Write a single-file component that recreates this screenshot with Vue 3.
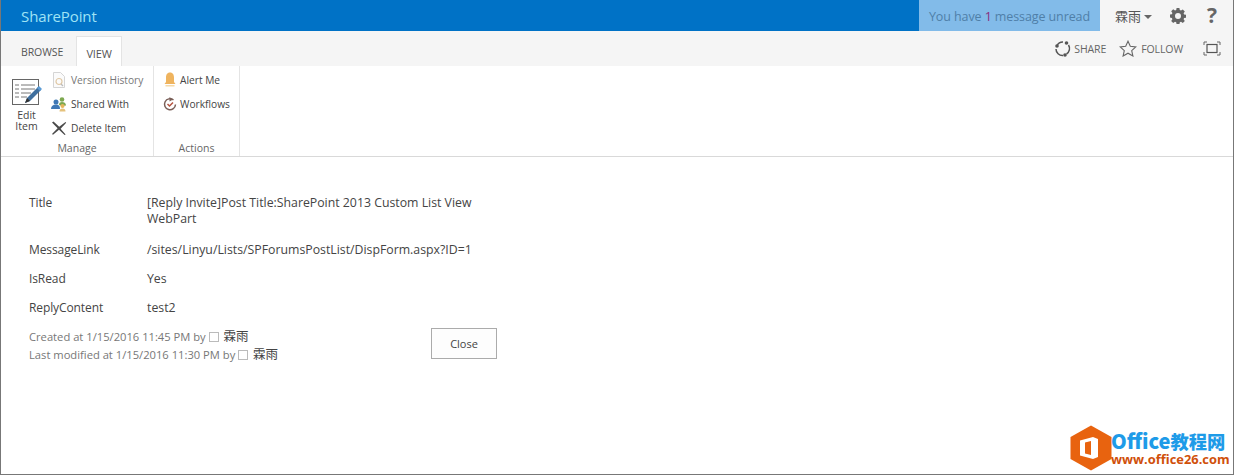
<script setup>
const fields = [
  { label: 'Title', value: '[Reply Invite]Post Title:SharePoint 2013 Custom List View WebPart' },
  { label: 'MessageLink', value: '/sites/Linyu/Lists/SPForumsPostList/DispForm.aspx?ID=1' },
  { label: 'IsRead', value: 'Yes' },
  { label: 'ReplyContent', value: 'test2' },
]
</script>

<template>
  <div class="page">
    <header class="topbar">
      <div class="brand">SharePoint</div>
      <div class="notice">You have <span class="count">1</span> message unread</div>
      <div class="user">
        <span class="username">霖雨</span>
        <span class="caret"></span>
      </div>
      <svg class="gear" width="16" height="16" viewBox="0 0 16 16">
        <path fill="#666" fill-rule="evenodd" d="M6.6 0h2.800l.4 2.100 1.200.5L12.800 1.400l2 2-1.200 1.800.5 1.200 2.100.4v2.800l-2.100.4-.5 1.200 1.200 1.800-2 2-1.800-1.200-1.200.5-.4 2.100H6.600l-.4-2.100-1.200-.5-1.800 1.200-2-2 1.200-1.800-.5-1.200L-.2 9.400V6.600l2.100-.4.500-1.200L1.200 3.200l2-2L5 2.400l1.200-.5zM8 5a3 3 0 1 0 0 6 3 3 0 0 0 0-6z"/>
      </svg>
      <div class="help">?</div>
    </header>

    <nav class="tabs">
      <div class="tab browse">BROWSE</div>
      <div class="tab active">VIEW</div>
      <div class="actions">
        <span class="action">
          <svg width="17" height="17" viewBox="0 0 17 17" fill="none">
            <path d="M3 5.500A6.500 6.500 0 0 1 9 2M14.500 5A6.500 6.500 0 0 1 12.500 14M9 15.500A6.500 6.500 0 0 1 2 9" stroke="#555" stroke-width="1.500"/>
            <circle cx="3" cy="6" r="1.800" fill="#555"/><circle cx="12.500" cy="3" r="1.800" fill="#555"/><circle cx="11" cy="15" r="1.800" fill="#555"/>
          </svg>
          SHARE
        </span>
        <span class="action follow">
          <svg width="18" height="17" viewBox="0 0 18 17" fill="none">
            <path d="M9 1.200l2.300 5.100 5.500.6-4.100 3.700 1.200 5.400L9 13.200 4.100 16l1.200-5.400L1.200 6.900l5.500-.6z" stroke="#666" stroke-width="1.100"/>
          </svg>
          FOLLOW
        </span>
        <svg class="focus" width="18" height="15" viewBox="0 0 18 15" fill="none">
          <path d="M1 4V1h3M14 1h3v3M17 11v3h-3M4 14H1v-3" stroke="#666"/>
          <rect x="4" y="3.500" width="10" height="8" stroke="#555" stroke-width="1.200"/>
        </svg>
      </div>
    </nav>

    <section class="ribbon">
      <div class="group manage">
        <div class="group-body">
          <div class="large">
            <svg width="32" height="32" viewBox="0 0 32 32" fill="none">
              <rect x="1.500" y="1.500" width="26" height="25" fill="#fff" stroke="#666"/>
              <path d="M4 7h4M10 7h14M4 11h4M10 11h14M4 15h4M10 15h10M4 19h4M10 19h6" stroke="#777"/>
              <path d="M14 25l2-5L27 9l3 3-11 11z" fill="#3f6f9e"/>
              <path d="M26 10l3 3 2-2-3-3z" fill="#5b9bd5"/>
              <path d="M14 25l2-5 3 3z" fill="#333"/>
            </svg>
            <span class="large-label">Edit<br />Item</span>
          </div>
          <div class="stack">
            <div class="cmd muted">
              <svg width="16" height="18" viewBox="0 0 16 18" fill="none">
                <path d="M2.500 1.500h7l4 4v11h-11z" fill="#fbfbfb" stroke="#d5d5d5"/>
                <circle cx="8" cy="10.500" r="3" stroke="#e0c9a6" stroke-width="1.200"/>
                <path d="M10 13l2 2" stroke="#bbb" stroke-width="1.200"/>
              </svg>
              Version History
            </div>
            <div class="cmd">
              <svg width="16" height="16" viewBox="0 0 16 16">
                <circle cx="5" cy="6" r="2.500" fill="#3f78b5"/><path d="M0 13c0-3 2-4.500 5-4.500S9 10 9 13z" fill="#3f78b5"/>
                <circle cx="11" cy="3.500" r="2.300" fill="#7da84f"/><path d="M8 9c0-2 1-3 3-3s4 1 4 3.500L11 10z" fill="#7da84f"/>
                <circle cx="11.500" cy="10" r="2" fill="#e5b55a"/><path d="M8.500 15.500c0-2 1-3 3-3s3 1 3 3z" fill="#e5c27c"/>
              </svg>
              Shared With
            </div>
            <div class="cmd">
              <svg width="16" height="16" viewBox="0 0 16 16">
                <path d="M1 2.500l1.500-1L8.200 6.700 14.500 2l.7.8-5.600 5.900 5 5.800-1 .6L8 9.800 2 14.800l-1-.8 5.600-5.700z" fill="#4a4a4a"/>
              </svg>
              Delete Item
            </div>
          </div>
        </div>
        <div class="group-name">Manage</div>
      </div>
      <div class="group acts">
        <div class="group-body">
          <div class="stack">
            <div class="cmd">
              <svg width="16" height="16" viewBox="0 0 16 16">
                <path d="M8 .5c3 0 4 2.500 4 5v4.500l1.500 2h-11L4 10V5.500C4 3 5 .5 8 .5z" fill="#efb45f"/>
                <rect x="3.500" y="13" width="9" height="1.500" fill="#f6d9a8"/>
              </svg>
              Alert Me
            </div>
            <div class="cmd">
              <svg width="16" height="16" viewBox="0 0 16 16" fill="none">
                <path d="M11.500 4A5.500 5.500 0 1 0 13.500 8.500" stroke="#7a5f58" stroke-width="1.500"/>
                <path d="M7.500 1l3.500 2.500L7.500 5.500z" fill="#7a5f58"/>
                <path d="M5.500 8l2 2 3.500-3.500" stroke="#b5533f" stroke-width="1.500"/>
              </svg>
              Workflows
            </div>
          </div>
        </div>
        <div class="group-name">Actions</div>
      </div>
    </section>

    <main class="content">
      <div class="form">
        <div v-for="field in fields" :key="field.label" class="row">
          <div class="label">{{ field.label }}</div>
          <div class="value">{{ field.value }}</div>
        </div>
      </div>
      <div class="footer">
        <div class="meta">
          <div>Created at 1/15/2016 11:45 PM by <i class="presence"></i> <b>霖雨</b></div>
          <div>Last modified at 1/15/2016 11:30 PM by <i class="presence"></i> <b>霖雨</b></div>
        </div>
        <button class="close" type="button">Close</button>
      </div>
    </main>

    <div class="watermark">
      <svg width="42" height="46" viewBox="0 0 42 46">
        <path d="M21 .5L41.500 12v22L21 45.500.5 34V12z" fill="#e8630f"/>
        <path d="M23 12l-13 3.500v15L23 34l5-2V14z" fill="#fff"/>
        <path d="M21 16l-6 1.500v11l6 1.500z" fill="#e8630f"/>
      </svg>
      <div class="mark-text">
        <div class="mark-top">Office<span class="mark-cjk">教程网</span></div>
        <div class="mark-url">www.office26.com</div>
      </div>
    </div>
  </div>
</template>

<style>
html, body { margin: 0; background: #fff; }
</style>

<style scoped>
.page {
  position: relative;
  box-sizing: border-box;
  width: 1234px;
  height: 475px;
  overflow: hidden;
  background: #fff;
  border-left: 1px solid #777;
  border-right: 1px solid #777;
  border-bottom: 1px solid #777;
  font-family: "Open Sans", "Noto Sans CJK SC", sans-serif;
  color: #444;
  font-size: 12px;
}
.topbar {
  display: flex;
  align-items: center;
  height: 31px;
  background: #f5f5f5;
}
.brand {
  flex: 1;
  align-self: stretch;
  background: #0072c6;
  color: #9fe3f5;
  font-size: 15px;
  line-height: 33px;
  padding-left: 20px;
  letter-spacing: -0.1px;
}
.notice {
  width: 181px;
  align-self: stretch;
  background: #82bbe9;
  color: #4f7fa8;
  font-size: 12.500px;
  line-height: 33px;
  text-align: center;
  letter-spacing: -0.1px;
}
.count { color: #8a2b7c; }
.user {
  display: flex;
  align-items: center;
  margin-left: 15px;
  width: 55px;
  color: #555;
  font-size: 13px;
}
.username { font-family: "Noto Sans CJK SC", sans-serif; }
.caret {
  width: 0;
  height: 0;
  margin-left: 3px;
  margin-top: 2px;
  border-left: 4px solid transparent;
  border-right: 4px solid transparent;
  border-top: 4px solid #666;
}
.help {
  margin-left: 21px;
  width: 26px;
  font-family: "Open Sans", sans-serif;
  font-size: 21px;
  font-weight: 700;
  color: #666;
  line-height: 33px;
}
.tabs {
  display: flex;
  height: 35px;
  background: #f5f5f5;
  padding-left: 5px;
  box-sizing: border-box;
}
.tab {
  height: 30px;
  margin-top: 5px;
  line-height: 33px;
  font-size: 10.500px;
  color: #555;
  letter-spacing: -0.1px;
}
.browse { padding: 0 13px 0 15px; }
.active {
  box-sizing: border-box;
  width: 46px;
  text-align: center;
  font-size: 11px;
  background: #fff;
  border: 1px solid #e4e4e4;
  border-bottom: none;
}
.actions {
  display: flex;
  align-items: center;
  margin-left: auto;
  padding-right: 12px;
  color: #666;
  font-size: 10.500px;
  letter-spacing: -0.1px;
}
.action {
  display: flex;
  align-items: center;
  gap: 3px;
}
.follow { margin-left: 13px; gap: 4px; }
.focus { margin-left: 20px; }
.ribbon {
  display: flex;
  height: 91px;
  box-sizing: border-box;
  border-bottom: 1px solid #d9d9d9;
}
.group {
  display: flex;
  flex-direction: column;
  height: 90px;
  box-sizing: border-box;
  border-right: 1px solid #e4e4e4;
}
.manage { width: 153px; }
.acts { width: 86px; }
.group-body {
  display: flex;
  height: 69px;
  padding-top: 2px;
  box-sizing: border-box;
}
.group-name {
  height: 21px;
  text-align: center;
  font-size: 10.500px;
  line-height: 26px;
  color: #666;
}
.large {
  width: 50px;
  padding: 10px 0 0 1px;
  display: flex;
  flex-direction: column;
  align-items: center;
  box-sizing: border-box;
  font-size: 10.500px;
  color: #444;
  text-align: center;
}
.large svg { display: block; flex: none; }
.large-label { display: block; line-height: 11px; }
.stack { display: flex; flex-direction: column; }
.cmd {
  display: flex;
  flex: none;
  align-items: center;
  gap: 4px;
  height: 24px;
  font-size: 10.200px;
  color: #444;
  white-space: nowrap;
}
.cmd svg { flex: none; }
.acts .cmd { padding-left: 8px; gap: 2px; }
.muted { color: #777; }
.content { padding: 38px 0 0 28px; }
.form { width: 470px; }
.row {
  display: flex;
  padding-bottom: 13px;
  line-height: 16px;
  font-size: 12px;
  letter-spacing: -0.1px;
}
.row:first-child { padding-bottom: 15px; }
.row .label { width: 118px; flex: none; }
.row .value { width: 332px; font-size: 12.300px; letter-spacing: 0; }
.footer {
  display: flex;
  align-items: flex-start;
  margin-top: -1px;
}
.meta {
  width: 402px;
  font-size: 11.200px;
  line-height: 18px;
  color: #777;
}
.meta b {
  font-weight: 400;
  font-size: 12.500px;
  line-height: 1;
  color: #444;
  margin-left: 2px;
  font-family: "Noto Sans CJK SC", sans-serif;
}
.presence {
  display: inline-block;
  box-sizing: border-box;
  width: 10px;
  height: 10px;
  border: 1px solid #bbb;
  vertical-align: -0.500px;
}
.close {
  width: 66px;
  height: 31px;
  background: #fdfdfd;
  border: 1px solid #ababab;
  color: #444;
  font: 11px "Open Sans", sans-serif;
  padding: 0;
}
.watermark {
  position: absolute;
  right: 2px;
  bottom: 1px;
  display: flex;
  gap: 0;
  align-items: center;
  box-sizing: border-box;
  padding-left: 3px;
  width: 164px;
  height: 50px;
  background: #fff;
}
.mark-text { margin-left: -1px; line-height: 1; }
.mark-top {
  color: #1e9be8;
  font-family: "Noto Sans CJK SC", sans-serif;
  font-weight: 900;
  font-size: 20px;
  line-height: 22px;
  letter-spacing: 0;
}
.mark-cjk { font-size: 18.300px; }
.mark-url {
  color: #d0500b;
  font-weight: 700;
  font-size: 12.900px;
  line-height: 14px;
  letter-spacing: 0;
}
</style>
